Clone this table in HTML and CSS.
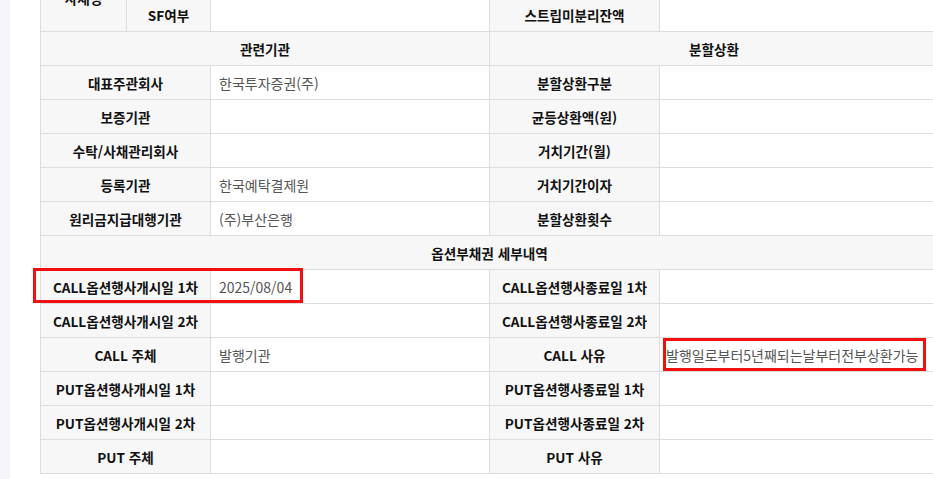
FILE: index.html
```html
<!DOCTYPE html>
<html lang="ko">
<head>
<meta charset="utf-8">
<link rel="stylesheet" href="styles.css">
<title>옵션부채권 세부내역</title>
</head>
<body>
<div class="page">
  <div class="gutter"></div>
  <main class="main">
    <table class="info">
      <colgroup>
        <col class="c1"><col class="c2"><col class="c3"><col class="c4"><col class="c5">
      </colgroup>
      <tr>
        <th class="lbl" rowspan="2">사채정</th>
        <th class="lbl"></th>
        <td></td>
        <th class="lbl"></th>
        <td></td>
      </tr>
      <tr>
        <th class="lbl">SF여부</th>
        <td></td>
        <th class="lbl">스트립미분리잔액</th>
        <td></td>
      </tr>
      <tr>
        <th class="sec" colspan="3">관련기관</th>
        <th class="sec" colspan="2">분할상환</th>
      </tr>
      <tr>
        <th class="lbl" colspan="2">대표주관회사</th>
        <td>한국투자증권(주)</td>
        <th class="lbl">분할상환구분</th>
        <td></td>
      </tr>
      <tr>
        <th class="lbl" colspan="2">보증기관</th>
        <td></td>
        <th class="lbl">균등상환액(원)</th>
        <td></td>
      </tr>
      <tr>
        <th class="lbl" colspan="2">수탁/사채관리회사</th>
        <td></td>
        <th class="lbl">거치기간(월)</th>
        <td></td>
      </tr>
      <tr>
        <th class="lbl" colspan="2">등록기관</th>
        <td>한국예탁결제원</td>
        <th class="lbl">거치기간이자</th>
        <td></td>
      </tr>
      <tr>
        <th class="lbl" colspan="2">원리금지급대행기관</th>
        <td>(주)부산은행</td>
        <th class="lbl">분할상환횟수</th>
        <td></td>
      </tr>
      <tr>
        <th class="sec" colspan="5">옵션부채권 세부내역</th>
      </tr>
      <tr>
        <th class="lbl" colspan="2">CALL옵션행사개시일 1차</th>
        <td>2025/08/04</td>
        <th class="lbl">CALL옵션행사종료일 1차</th>
        <td></td>
      </tr>
      <tr>
        <th class="lbl" colspan="2">CALL옵션행사개시일 2차</th>
        <td></td>
        <th class="lbl">CALL옵션행사종료일 2차</th>
        <td></td>
      </tr>
      <tr>
        <th class="lbl" colspan="2">CALL 주체</th>
        <td>발행기관</td>
        <th class="lbl">CALL 사유</th>
        <td class="tight">발행일로부터5년째되는날부터전부상환가능</td>
      </tr>
      <tr>
        <th class="lbl" colspan="2">PUT옵션행사개시일 1차</th>
        <td></td>
        <th class="lbl">PUT옵션행사종료일 1차</th>
        <td></td>
      </tr>
      <tr>
        <th class="lbl" colspan="2">PUT옵션행사개시일 2차</th>
        <td></td>
        <th class="lbl">PUT옵션행사종료일 2차</th>
        <td></td>
      </tr>
      <tr>
        <th class="lbl" colspan="2">PUT 주체</th>
        <td></td>
        <th class="lbl">PUT 사유</th>
        <td></td>
      </tr>
    </table>
    <div class="mark mark-a"></div>
    <div class="mark mark-b"></div>
  </main>
</div>
</body>
</html>
```

FILE: styles.css
```css
html, body {
  margin: 0;
  padding: 0;
  overflow: hidden;
  background: #ffffff;
  font-family: "Noto Sans CJK KR", "Noto Sans", sans-serif;
  font-size: 13px;
  color: #222;
}

.page {
  display: flex;
  width: 933px;
  height: 479px;
  overflow: hidden;
}

.gutter {
  flex: 0 0 10px;
  background: #f4f5f9;
}

.main {
  position: relative;
  flex: 1 1 auto;
  padding-left: 30px;
  overflow: hidden;
}

.info {
  border-collapse: collapse;
  table-layout: fixed;
  width: 898px;
  margin-top: -37px;
}

.c1 { width: 86px; }
.c2 { width: 84px; }
.c3 { width: 279px; }
.c4 { width: 170px; }
.c5 { width: 279px; }

.info th,
.info td {
  border: 1px solid #dddddd;
  height: 33px;
  padding: 0 8px;
  box-sizing: border-box;
  line-height: 16px;
  white-space: nowrap;
  overflow: visible;
}

.info tr {
  height: 34px;
}

.info th {
  background: #f7f7f7;
  font-weight: 700;
  font-size: 13.6px;
  color: #111;
  text-align: center;
}

.info td {
  background: #ffffff;
  color: #555;
  font-size: 14px;
  text-align: left;
}

.info td.tight {
  padding-left: 6px;
}

.mark {
  position: absolute;
  border: 3px solid #f01010;
  box-sizing: border-box;
  pointer-events: none;
}

.mark-a {
  left: 23px;
  top: 268px;
  width: 270px;
  height: 35px;
}

.mark-b {
  left: 653px;
  top: 338px;
  width: 263px;
  height: 33px;
}
```
